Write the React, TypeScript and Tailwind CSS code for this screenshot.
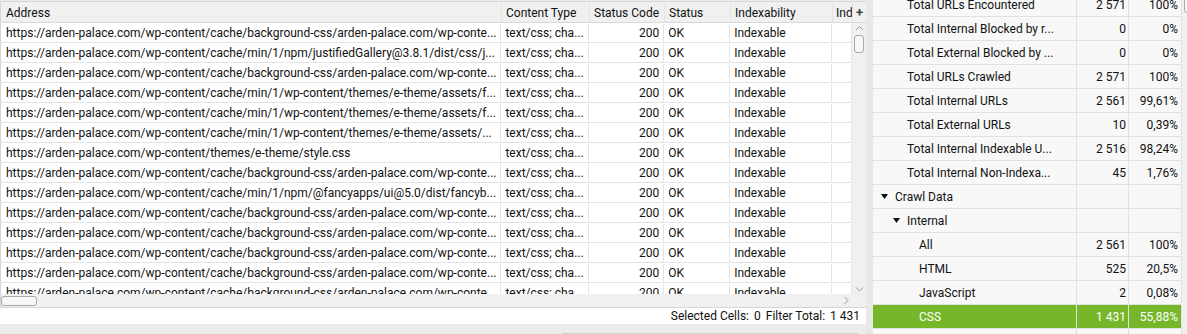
import React from 'react'

// Left grid: crawl results
const BG = 'https://arden-palace.com/wp-content/cache/background-css/arden-palace.com/wp-conte...'
const THEME = 'https://arden-palace.com/wp-content/cache/min/1/wp-content/themes/e-theme/assets/f...'

const addresses = [
  BG,
  'https://arden-palace.com/wp-content/cache/min/1/npm/justifiedGallery@3.8.1/dist/css/j...',
  BG,
  THEME,
  THEME,
  'https://arden-palace.com/wp-content/cache/min/1/wp-content/themes/e-theme/assets/...',
  'https://arden-palace.com/wp-content/themes/e-theme/style.css',
  BG,
  'https://arden-palace.com/wp-content/cache/min/1/npm/@fancyapps/ui@5.0/dist/fancyb...',
  BG,
  BG,
  BG,
  BG,
  BG,
]

// Right tree: overview
interface OverviewRow {
  label: string
  count?: string
  pct?: string
  level: number
  expandable?: boolean
  selected?: boolean
}

const overview: OverviewRow[] = [
  { label: 'Total URLs Encountered', count: '2 571', pct: '100%', level: 1 },
  { label: 'Total Internal Blocked by r...', count: '0', pct: '0%', level: 1 },
  { label: 'Total External Blocked by ...', count: '0', pct: '0%', level: 1 },
  { label: 'Total URLs Crawled', count: '2 571', pct: '100%', level: 1 },
  { label: 'Total Internal URLs', count: '2 561', pct: '99,61%', level: 1 },
  { label: 'Total External URLs', count: '10', pct: '0,39%', level: 1 },
  { label: 'Total Internal Indexable U...', count: '2 516', pct: '98,24%', level: 1 },
  { label: 'Total Internal Non-Indexa...', count: '45', pct: '1,76%', level: 1 },
  { label: 'Crawl Data', level: 0, expandable: true },
  { label: 'Internal', level: 1, expandable: true },
  { label: 'All', count: '2 561', pct: '100%', level: 2 },
  { label: 'HTML', count: '525', pct: '20,5%', level: 2 },
  { label: 'JavaScript', count: '2', pct: '0,08%', level: 2 },
  { label: 'CSS', count: '1 431', pct: '55,88%', level: 2, selected: true },
  { label: '', level: 2 },
]

function Triangle() {
  return (
    <svg width="7" height="5" viewBox="0 0 7 5" className="shrink-0">
      <polygon points="0,0 7,0 3.5,5" fill="#111" />
    </svg>
  )
}

function Chevron({ dir }: { dir: 'up' | 'down' | 'right' }) {
  const d =
    dir === 'up' ? 'M1 5 L4.5 1.5 L8 5' : dir === 'down' ? 'M1 1.5 L4.5 5 L8 1.5' : 'M1.5 1 L5 4.5 L1.5 8'
  const size = dir === 'right' ? { w: 7, h: 9 } : { w: 9, h: 7 }
  return (
    <svg width={size.w} height={size.h} viewBox={`0 0 ${size.w} ${size.h}`}>
      <path d={d} stroke="#9a9a9a" strokeWidth="1" fill="none" />
    </svg>
  )
}

const cell = 'h-full flex items-center border-r border-[#e3e3e3] overflow-hidden whitespace-nowrap'

export default function App() {
  return (
    <div className="w-[1187px] h-[334px] flex bg-[#ececec] overflow-hidden text-[12px] text-[#111] font-['Roboto',sans-serif]">
      {/* Left panel */}
      <div className="w-[866px] flex flex-col shrink-0">
        <div className="h-[293px] flex flex-col bg-white border-t border-l border-[#d6d6d6] mt-[1px] overflow-hidden">
          {/* Header */}
          <div className="h-[21px] flex shrink-0 bg-[#f0f0f0] border-b border-[#d9d9d9] pt-[2px]">
            <div className={`${cell} w-[501px] pl-[5px] border-[#dadada]`}>Address</div>
            <div className={`${cell} w-[88px] pl-[4px] border-[#dadada]`}>Content Type</div>
            <div className={`${cell} w-[75px] pl-[4px] border-[#dadada]`}>Status Code</div>
            <div className={`${cell} w-[66px] pl-[4px] border-[#dadada]`}>Status</div>
            <div className={`${cell} w-[102px] pl-[4px] border-[#dadada]`}>Indexability</div>
            <div className={`${cell} w-[20px] pl-[3px] border-[#dadada]`}>Ind</div>
            <div className="w-[13px] flex items-center justify-center font-bold text-[13px] text-[#444]">+</div>
          </div>
          <div className="flex flex-1 overflow-hidden">
            {/* Rows */}
            <div className="w-[851px] flex flex-col overflow-hidden">
              {addresses.map((a, i) => (
                <div key={i} className="h-[20px] flex shrink-0 border-b border-[#e3e3e3] pt-[1px]">
                  <div className={`${cell} w-[501px] pl-[5px]`}>{a}</div>
                  <div className={`${cell} w-[88px] pl-[4px]`}>text/css; cha...</div>
                  <div className={`${cell} w-[75px] pr-[4px] justify-end`}>200</div>
                  <div className={`${cell} w-[66px] pl-[4px]`}>OK</div>
                  <div className={`${cell} w-[102px] pl-[4px]`}>Indexable</div>
                  <div className={`${cell} w-[20px]`}></div>
                </div>
              ))}
            </div>
            {/* Vertical scrollbar */}
            <div className="w-[14px] flex flex-col items-center bg-[#f0f0f0] pt-[2px]">
              <Chevron dir="up" />
              <div className="mt-[3px] w-[10px] h-[18px] rounded-[3px] border border-[#a8a8a8] bg-[#f7f7f7]" />
              <div className="flex-1" />
              <div className="mb-[1px]">
                <Chevron dir="down" />
              </div>
            </div>
          </div>
        </div>
        {/* Horizontal scrollbar */}
        <div className="h-[13px] flex shrink-0 bg-[#f0f0f0] border-l border-[#d6d6d6]">
          <div className="w-[851px] flex items-center">
            <div className="w-[36px] h-[10px] rounded-[3px] border border-[#a8a8a8] bg-[#f7f7f7]" />
            <div className="flex-1" />
            <div className="mr-[2px] flex items-center">
              <Chevron dir="right" />
            </div>
          </div>
        </div>
        {/* Status bar */}
        <div className="h-[17px] shrink-0 bg-white border-t border-[#d4d4d4] flex items-center justify-end pr-[6px] gap-[5px]">
          <span>Selected Cells:</span>
          <span>0</span>
          <span>Filter Total:</span>
          <span>1 431</span>
        </div>
        <div className="flex-1 flex justify-end items-end pr-[8px]">
          <div className="w-[296px] h-[1px] bg-[#cfcfcf]" />
        </div>
      </div>

      {/* Splitter */}
      <div className="w-[7px] shrink-0 bg-[#e8e8e8]" />

      {/* Right panel */}
      <div className="flex-1 flex bg-[#f8f8f8] overflow-hidden">
        <div className="w-[309px] shrink-0 flex flex-col overflow-hidden">
          <div className="-mt-[7px] flex flex-col">
            {overview.map((r, i) => (
              <div
                key={i}
                className={`h-[24px] flex shrink-0 border-b border-[#e1e1e1] ${
                  r.selected ? 'bg-[#76b72a] text-white' : ''
                }`}
              >
                <div
                  className={`w-[204px] h-full flex items-center border-r border-[#e1e1e1] overflow-hidden whitespace-nowrap ${
                    r.level === 0 ? 'pl-[8px]' : r.level === 1 ? (r.expandable ? 'pl-[20px]' : 'pl-[34px]') : 'pl-[46px]'
                  }`}
                >
                  {r.expandable && (
                    <span className="mr-[7px] flex items-center">
                      <Triangle />
                    </span>
                  )}
                  <span>{r.label}</span>
                </div>
                <div className="w-[52px] h-full flex items-center justify-end pr-[2px] border-r border-[#e1e1e1]">
                  {r.count}
                </div>
                <div className="w-[53px] h-full flex items-center justify-end pr-[3px] border-r border-[#e1e1e1]">
                  {r.pct}
                </div>
              </div>
            ))}
          </div>
        </div>
        {/* Right scrollbar (cut off) */}
        <div className="flex-1 bg-[#f0f0f0] pl-[2px]">
          <div className="w-[10px] h-[15px] -mt-[2px] rounded-[3px] border border-[#a8a8a8] bg-[#f7f7f7]" />
        </div>
      </div>
    </div>
  )
}
